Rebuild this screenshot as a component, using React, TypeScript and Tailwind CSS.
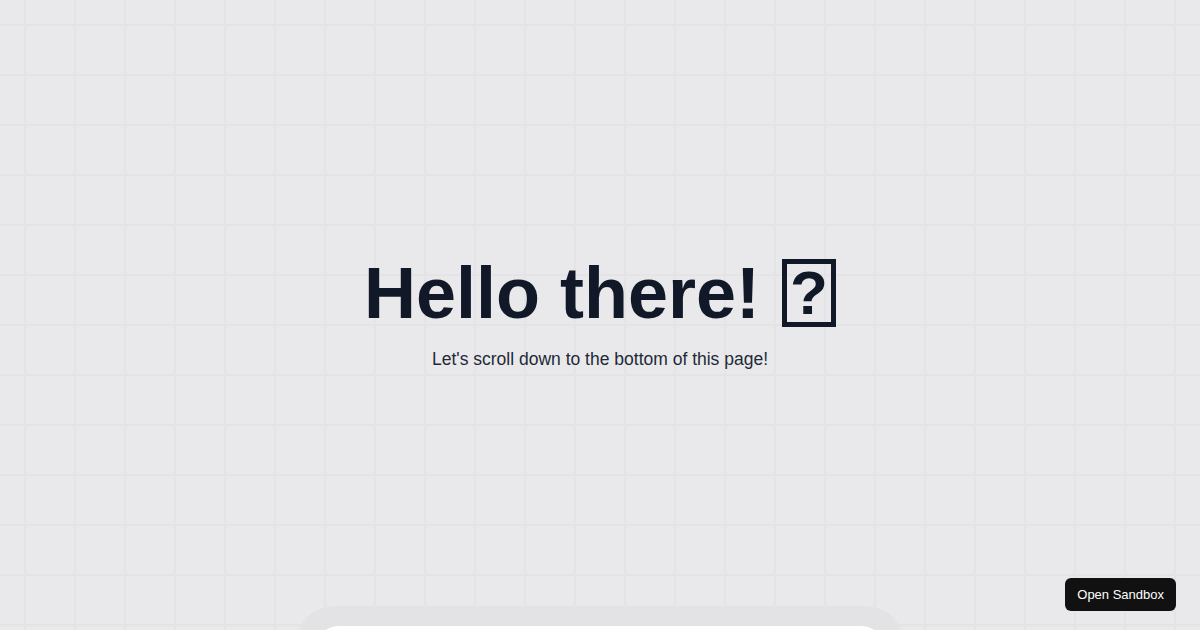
import React from 'react';

export default function App() {
  return (
    <div
      className="relative min-h-screen w-full overflow-hidden bg-[#e9e9eb] bg-[linear-gradient(to_right,#e4e4e6_2px,transparent_2px),linear-gradient(to_bottom,#e4e4e6_2px,transparent_2px)] bg-[size:50px_50px] bg-[position:24px_24px] font-['Liberation_Sans',Arial,sans-serif]"
    >
      <section className="flex h-[606px] flex-col items-center justify-center pt-6 text-center">
        <h1 className="flex items-center justify-center gap-[22px] text-7xl font-bold leading-none text-[#111827]">
          <span>Hello there!</span>
          {/* the wave emoji shows as a missing-glyph box in the source */}
          <span
            aria-label="👋"
            className="flex h-[68px] w-[54px] items-end justify-center border-[5px] border-[#111827] pb-px text-[62px] leading-[56px]"
          >
            ?
          </span>
        </h1>
        <p className="mt-4 text-[17.5px] leading-7 text-[#1f2937]">Let's scroll down to the bottom of this page!</p>
      </section>

      <div className="mx-auto w-[610px] rounded-t-[40px] bg-[#e3e3e5] px-5 pt-5">
        <div className="h-[400px] rounded-t-[24px] bg-white"></div>
      </div>

      <button className="fixed bottom-[19px] right-6 rounded-md bg-[#111111] px-3 py-2 text-[13px] leading-[17px] text-white">
        Open Sandbox
      </button>
    </div>
  );
}
